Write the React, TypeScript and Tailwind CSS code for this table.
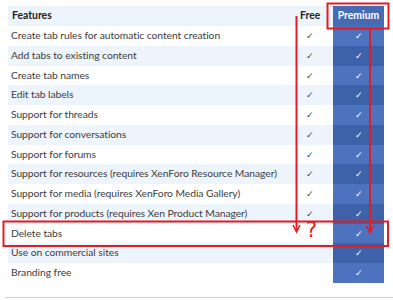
const features = [
	"Create tab rules for automatic content creation",
	"Add tabs to existing content",
	"Create tab names",
	"Edit tab labels",
	"Support for threads",
	"Support for conversations",
	"Support for forums",
	"Support for resources (requires XenForo Resource Manager)",
	"Support for media (requires XenForo Media Gallery)",
	"Support for products (requires Xen Product Manager)",
	"Delete tabs",
	"Use on commercial sites",
	"Branding free",
];

// rows the free edition has
const freeRows = 10;

export default function App() {
	return (
		<div
			className="relative w-[393px] h-[300px] overflow-hidden bg-white text-[#3d3d3d]"
			style={{ fontFamily: 'Lato, "Open Sans", sans-serif' }}
		>
			<div className="ml-[8px] mt-[6px] w-[376px]">
				{/* Header */}
				<div className="grid grid-cols-[282px_43px_51px] h-[20px] items-center bg-[#eef4fb] text-[10.4px] font-bold text-[#222]">
					<div className="pl-[4px]">Features</div>
					<div className="pl-[10px]">Free</div>
					<div className="flex h-full items-center justify-center bg-[#476bb3] text-white">Premium</div>
				</div>

				{/* Rows */}
				{features.map((name, i) => {
					const shaded = i % 2 === 1;
					return (
						<div
							key={name}
							className={`grid grid-cols-[282px_43px_51px] h-[19.75px] items-center text-[10.3px] tracking-[-0.05px] ${
								shaded ? "bg-[#eef4fb]" : "bg-white"
							}`}
						>
							<div className="pl-[3px] whitespace-nowrap">{name}</div>
							<div className="pl-[16px] text-[9px] text-[#444]">{i < freeRows ? "✓" : ""}</div>
							<div
								className={`flex h-full items-center justify-center text-[9px] text-white ${
									shaded ? "bg-[#3e62a9]" : "bg-[#4d73be]"
								}`}
							>
								✓
							</div>
						</div>
					);
				})}
			</div>

			<div className="ml-[5px] mt-[14px] h-px bg-[#cfcfcf]" />

			{/* Red annotations */}
			<svg className="absolute left-0 top-0" width="393" height="300" viewBox="0 0 393 300" fill="none">
				<rect x="327.5" y="3.5" width="61" height="25" stroke="#e31b23" strokeWidth="2" />
				<rect x="3.5" y="221.5" width="384.5" height="24.5" stroke="#e31b23" strokeWidth="2" />
				<path d="M296.5 16 V231" stroke="#e31b23" strokeWidth="2" />
				<path d="M293 225 L296.5 232 L300 225" stroke="#e31b23" strokeWidth="1.6" />
				<path d="M370 29 V232" stroke="#e31b23" strokeWidth="2" />
				<path d="M366.5 226 L370 233 L373.5 226" stroke="#e31b23" strokeWidth="1.6" />
			</svg>
			<div className="absolute left-[306px] top-[220px] text-[21px] leading-none text-[#e31b23]" style={{ fontFamily: '"DejaVu Sans", sans-serif' }}>
				?
			</div>
		</div>
	);
}
